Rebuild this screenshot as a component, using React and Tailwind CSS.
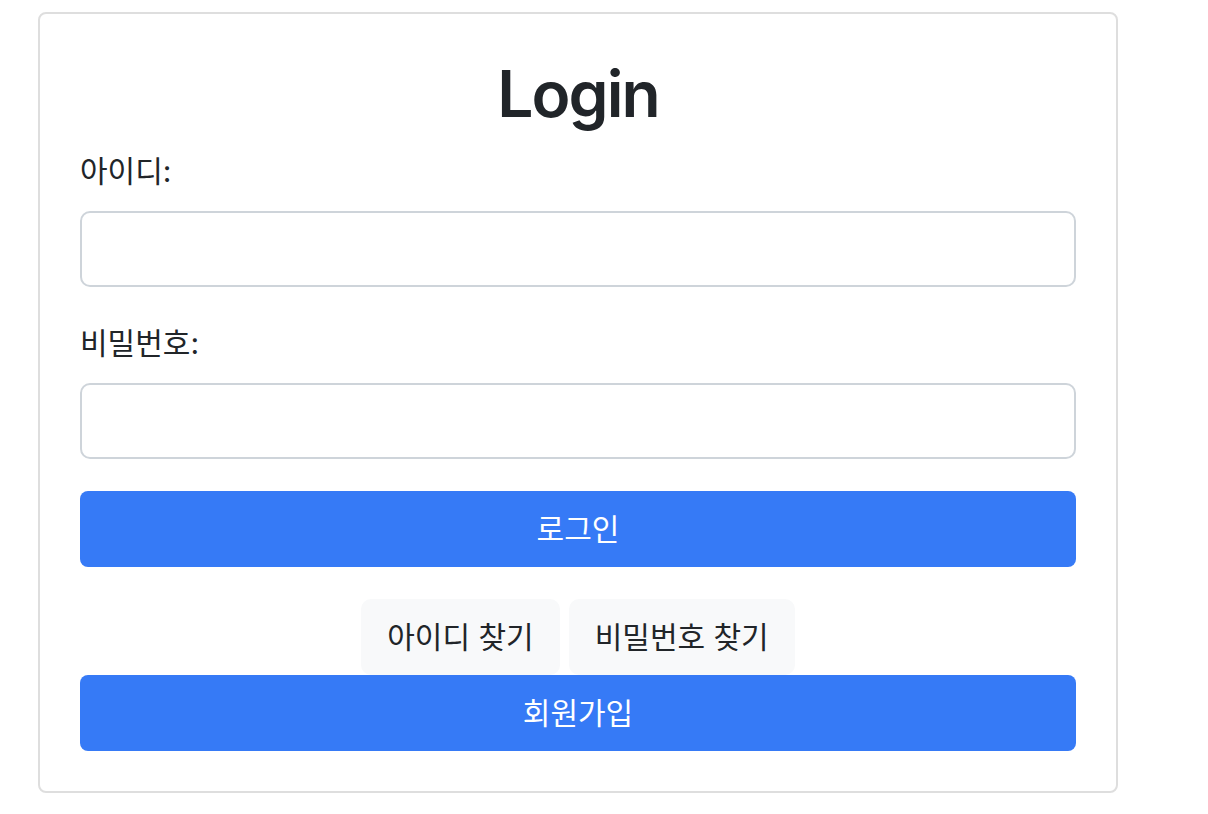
import React, { useState } from 'react';

const font = { fontFamily: '"Inter", "Noto Sans CJK KR", "Noto Sans", sans-serif' };

const Field = ({ label, type, value, onChange }) => (
  <div className="flex flex-col">
    <label className="text-[30px] leading-[42px] text-[#212529] mb-[19px]">{label}</label>
    <input
      type={type}
      value={value}
      onChange={(e) => onChange(e.target.value)}
      className="h-[76px] w-full rounded-[10px] border-2 border-[#ced4da] bg-white px-4 text-[28px] text-[#212529] outline-none"
    />
  </div>
);

const App = () => {
  const [userId, setUserId] = useState('');
  const [password, setPassword] = useState('');

  return (
    <div className="min-h-screen bg-white pt-[12px] pl-[38px]" style={font}>
      <div className="w-[1080px] rounded-[8px] border-2 border-[#dedede] p-[40px]">
        {/* Title */}
        <h1 className="text-center text-[64px] leading-[79px] font-semibold tracking-[-0.03em] text-[#212529] mb-[17px]">Login</h1>

        <Field label="아이디:" type="text" value={userId} onChange={setUserId} />
        <div className="h-[35px]" />
        <Field label="비밀번호:" type="password" value={password} onChange={setPassword} />

        <button className="mt-[32px] h-[76px] w-full rounded-[8px] bg-[#367af6] text-[30px] text-white">
          로그인
        </button>

        {/* Find links */}
        <div className="mt-[32px] flex justify-center gap-[9px]">
          <button className="h-[76px] rounded-[10px] bg-[#f8f9fa] px-[26px] text-[30px] text-[#212529]">
            아이디 찾기
          </button>
          <button className="h-[76px] rounded-[10px] bg-[#f8f9fa] px-[26px] text-[30px] text-[#212529]">
            비밀번호 찾기
          </button>
        </div>

        <button className="h-[76px] w-full rounded-[8px] bg-[#367af6] text-[30px] text-white">
          회원가입
        </button>
      </div>
    </div>
  );
};

export default App;
